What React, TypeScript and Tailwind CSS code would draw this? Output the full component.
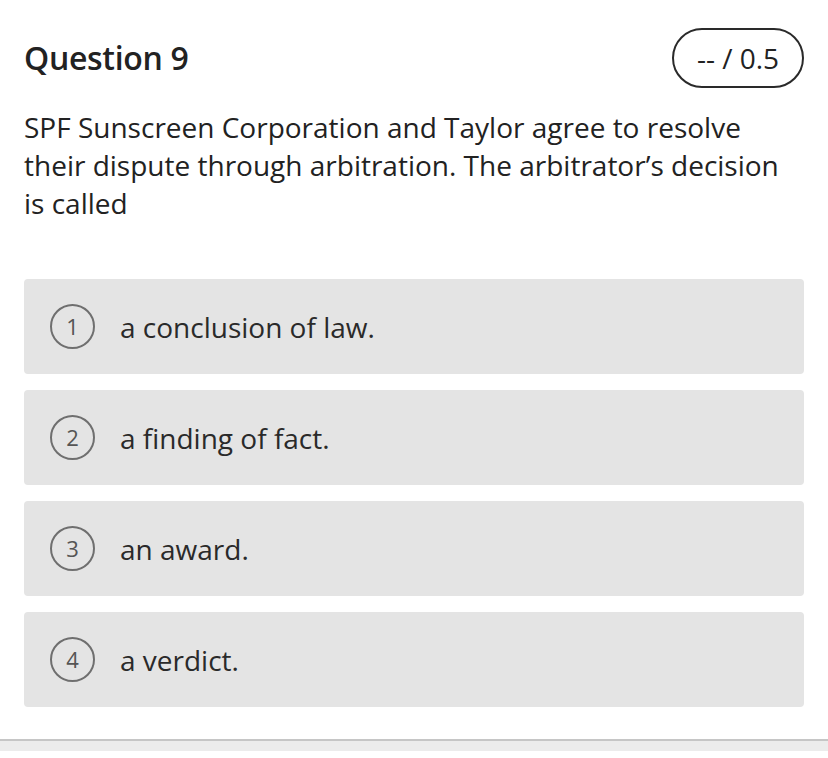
export default function App() {
  const options = ["a conclusion of law.", "a finding of fact.", "an award.", "a verdict."];

  return (
    <div className="w-[828px] h-[758px] bg-white text-[#222] font-['Open_Sans',sans-serif] overflow-hidden">
      <div className="px-6">
        <div className="flex items-center justify-between pt-[28px]">
          <h2 className="text-[32px] font-semibold tracking-[-0.3px]">Question 9</h2>
          <div className="h-[60px] w-[132px] rounded-full border-2 border-[#2a2a2a] flex items-center justify-center text-[28px]">
            -- / 0.5
          </div>
        </div>

        <p className="mt-[20px] text-[28px] leading-[38px] pr-6">
          SPF Sunscreen Corporation and Taylor agree to resolve their dispute through arbitration. The arbitrator’s decision is called
        </p>

        <div className="mt-[57px] flex flex-col gap-4">
          {options.map((opt, i) => (
            <div key={i} className="h-[95px] rounded bg-[#e4e4e4] flex items-center pl-[26px]">
              <span className="w-[45px] h-[45px] rounded-full border-2 border-[#6f6f6f] flex items-center justify-center text-[22px] text-[#555]">
                {i + 1}
              </span>
              <span className="ml-[25px] text-[28px] text-[#2a2a2a]">{opt}</span>
            </div>
          ))}
        </div>
      </div>

      <div className="mt-[32px] h-[2px] bg-[#c6c6c6]" />
      <div className="h-[10px] bg-[#ececec]" />
    </div>
  );
}
